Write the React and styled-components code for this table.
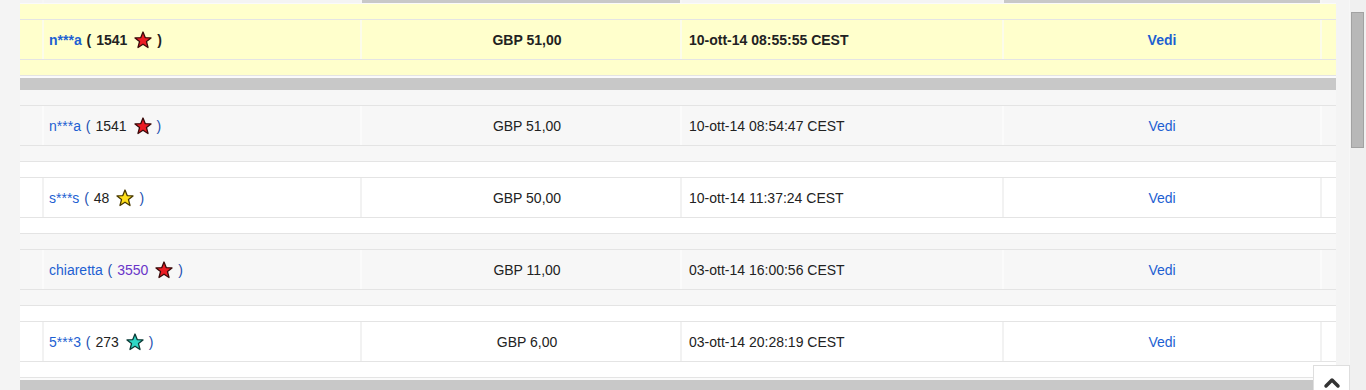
import React from "react";
import styled, {createGlobalStyle} from "styled-components";
import {ChevronUp} from "lucide-react";

const GlobalStyle = createGlobalStyle`
  html, body {
    margin: 0;
    padding: 0;
    background: #f4f4f4;
    font-family: "Liberation Sans", Arial, sans-serif;
    font-size: 14px;
    color: #222;
    overflow: hidden;
  }
`;

const COLS = "22px 316px 318px 320px 316px 14px";

const bgFor = {
  highlight: "#ffffcc",
  gray: "#f7f7f7",
  white: "#ffffff",
};

const sepFor = {
  highlight: "#fcfcea",
  gray: "#fbfbfb",
  white: "#f2f2f2",
};

const Screen = styled.div`
  display: flex;
  height: 390px;
  overflow: hidden;
`;

const Main = styled.div`
  flex: 1;
  padding: 0 13px 0 20px;
  background: #f4f4f4;
`;

const TopStrip = styled.div`
  display: grid;
  grid-template-columns: ${COLS};
  column-gap: 2px;
  height: 3px;
  background: #f6f6f6;
  border-bottom: 1px solid #fafafa;
`;

const StripCell = styled.div`
  background: ${(p) => (p.$dark ? "#c8c8c8" : "#f4f4f4")};
`;

const Item = styled.div`
  background: ${(p) => bgFor[p.$variant]};
  font-weight: ${(p) => (p.$variant === "highlight" ? "bold" : "normal")};
`;

const Spacer = styled.div`
  height: 15px;
  border-bottom: 1px solid #e4e4e4;
`;

const DataRow = styled.div`
  display: grid;
  grid-template-columns: ${COLS};
  column-gap: 2px;
  height: 39px;
  background: ${(p) => sepFor[p.$variant]};
  border-bottom: 1px solid #e4e4e4;
`;

const Cell = styled.div`
  display: flex;
  align-items: center;
  justify-content: ${(p) => p.$align || "flex-start"};
  padding: ${(p) => p.$pad || "0"};
  background: ${(p) => bgFor[p.$variant]};
  white-space: nowrap;
`;

const GroupBar = styled.div`
  height: 12px;
  background: #c8c8c8;
  border-top: 2px solid #fbfbfb;
`;

const Link = styled.span`
  color: ${(p) => (p.$visited ? "#6a35c9" : "#1d5fd2")};
  cursor: pointer;
`;

const Paren = styled.span`
  color: ${(p) => (p.$bold ? "#222" : "#2450b0")};
  margin: 0 1px;
`;

const Score = styled.span`
  color: ${(p) => (p.$visited ? "#6a35c9" : "#222")};
`;

const StarBox = styled.span`
  display: inline-flex;
  margin: 0 4px 0 7px;
  vertical-align: middle;
`;

const ScrollTrack = styled.div`
  width: 17px;
  background: #f0f0f0;
  border-left: 1px solid #f7f7f7;
  padding-top: 12px;
`;

const ScrollThumb = styled.div`
  width: 11px;
  height: 134px;
  margin-left: 1px;
  background: #b8b8b8;
  border: 1px solid #a2a2a2;
`;

const TopButton = styled.div`
  position: fixed;
  right: 16px;
  top: 365px;
  width: 37px;
  height: 40px;
  background: #fff;
  border: 1px solid #dedede;
  display: flex;
  justify-content: center;
  padding-top: 5px;
  box-sizing: border-box;
  color: #333;
`;

const starColors = {
  red: {fill: "#ec1c24", stroke: "#3a0a0a"},
  yellow: {fill: "#ffdf1a", stroke: "#4a3a00"},
  teal: {fill: "#2fd8c6", stroke: "#0c3a36"},
};

const Star = ({color}) => {
  const c = starColors[color];
  return (
    <StarBox>
      <svg width="18" height="18" viewBox="0 0 18 18">
        <polygon
          points="9,1 11.2,6.6 17,6.9 12.5,10.6 14,16.5 9,13.2 4,16.5 5.5,10.6 1,6.9 6.8,6.6"
          fill={c.fill}
          stroke={c.stroke}
          strokeWidth="1.3"
          strokeLinejoin="round"
        />
      </svg>
    </StarBox>
  );
};

const bids = [
  {user: "n***a", score: "1541", star: "red", price: "GBP 51,00", date: "10-ott-14 08:55:55 CEST", variant: "highlight"},
  {user: "n***a", score: "1541", star: "red", price: "GBP 51,00", date: "10-ott-14 08:54:47 CEST", variant: "gray", barBefore: true},
  {user: "s***s", score: "48", star: "yellow", price: "GBP 50,00", date: "10-ott-14 11:37:24 CEST", variant: "white"},
  {user: "chiaretta", score: "3550", visited: true, star: "red", price: "GBP 11,00", date: "03-ott-14 16:00:56 CEST", variant: "gray"},
  {user: "5***3", score: "273", star: "teal", price: "GBP 6,00", date: "03-ott-14 20:28:19 CEST", variant: "white"},
];

const BidItem = ({bid}) => {
  const v = bid.variant;
  const bold = v === "highlight";
  return (
    <Item $variant={v}>
      <Spacer />
      <DataRow $variant={v}>
        <Cell $variant={v} />
        <Cell $variant={v} $pad="0 0 0 5px">
          <Link>{bid.user}</Link>
          &nbsp;<Paren $bold={bold}>(</Paren>&nbsp;
          <Score $visited={bid.visited}>{bid.score}</Score>
          <Star color={bid.star} />
          <Paren $bold={bold}>)</Paren>
        </Cell>
        <Cell $variant={v} $align="center" $pad="0 0 0 12px">{bid.price}</Cell>
        <Cell $variant={v} $pad="0 0 0 7px">{bid.date}</Cell>
        <Cell $variant={v} $align="center"><Link>Vedi</Link></Cell>
        <Cell $variant={v} />
      </DataRow>
      <Spacer />
    </Item>
  );
};

const App = () => {
  return (
    <Screen>
      <GlobalStyle />
      <Main>
        <TopStrip>
          <StripCell />
          <StripCell />
          <StripCell $dark />
          <StripCell />
          <StripCell $dark />
          <StripCell />
        </TopStrip>
        {bids.map((bid, i) => (
          <React.Fragment key={i}>
            {bid.barBefore && <GroupBar />}
            <BidItem bid={bid} />
          </React.Fragment>
        ))}
        <GroupBar />
      </Main>
      <ScrollTrack>
        <ScrollThumb />
      </ScrollTrack>
      <TopButton>
        <ChevronUp size={24} strokeWidth={3.5} />
      </TopButton>
    </Screen>
  );
};

export default App;
